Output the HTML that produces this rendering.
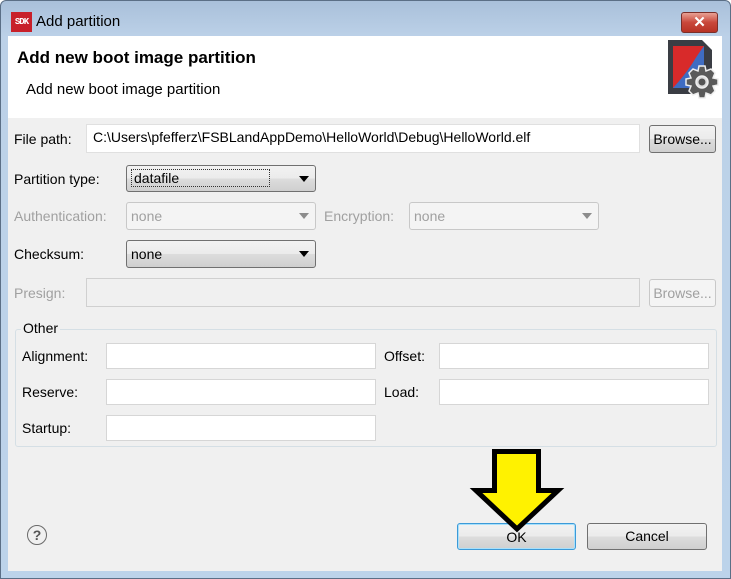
<!DOCTYPE html>
<html><head><style>
body{margin:0;width:731px;height:579px;overflow:hidden;font-family:"Liberation Sans",sans-serif;font-size:14px;color:#000;}
.win{position:absolute;left:0;top:0;width:729px;height:577px;border:1px solid #5b6f86;border-radius:6px 6px 0 0;background:linear-gradient(#a9c0da 0,#bcd1e8 36px,#bcd3ea 100%);}
.ab{position:absolute;}
.hdr{position:absolute;left:8px;top:36px;width:714px;height:82px;background:#fff;}
.body{position:absolute;left:8px;top:118px;width:714px;height:453px;background:#f0f0f0;}
.lbl{position:absolute;font-size:14px;}
.dis{color:#a0a0a0;}
.inp{position:absolute;background:#fff;border:1px solid #d6d6d6;box-sizing:border-box;}
.btn{position:absolute;box-sizing:border-box;border:1px solid #707070;border-radius:3px;background:linear-gradient(#f2f2f2 0,#ebebeb 50%,#dddddd 50%,#cfcfcf 100%);text-align:center;font-size:14px;}
.combo{position:absolute;box-sizing:border-box;border:1px solid #707070;border-radius:3px;background:linear-gradient(#f2f2f2 0,#ebebeb 50%,#dddddd 50%,#cfcfcf 100%);padding-left:4px;}
.combo.d{border-color:#c8c8c8;background:#f4f4f4;color:#a0a0a0;}
.arr{position:absolute;right:6px;top:10px;width:0;height:0;border-left:5px solid transparent;border-right:5px solid transparent;border-top:6px solid #000;}
.d .arr{border-top-color:#8c8c8c;}
</style></head><body>
<div class="win"></div>
<div class="ab" style="left:11px;top:12px;width:21px;height:20px;background:#c8202a;color:#fff;font:bold 9px 'Liberation Mono',monospace;line-height:20px;text-align:center;letter-spacing:-1px;">SDK</div>
<div class="ab" style="left:36px;top:13px;font-size:15px;">Add partition</div>
<div class="ab" style="left:681px;top:12px;width:37px;height:21px;box-sizing:border-box;border:1px solid #7a2f2a;border-radius:3px;background:linear-gradient(#e8a194,#c9473a 50%,#b73325);color:#fff;font:bold 15px 'Liberation Sans';text-align:center;line-height:19px;">✕</div>
<div class="hdr"></div>
<div class="ab" style="left:17px;top:48px;font-weight:bold;font-size:17px;">Add new boot image partition</div>
<div class="ab" style="left:26px;top:81px;font-size:15px;">Add new boot image partition</div>
<svg class="ab" style="left:664px;top:36px" width="56" height="64" viewBox="0 0 56 64">
<path d="M4 4 H38 L48 14 V58 H4 Z" fill="#3a3d44"/>
<path d="M9 10 H40 V52 H9 Z" fill="#d82a2a"/>
<path d="M40 10 V52 H9 Q20 40 28 28 Q34 18 40 10Z" fill="#3f6cc2"/>
<g transform="translate(38,46)" fill="#5a5a5a" stroke="#eee" stroke-width="1.5">
<path d="M-3 -16 H3 L4 -11 L9 -13 L13 -9 L11 -4 L16 -3 V3 L11 4 L13 9 L9 13 L4 11 L3 16 H-3 L-4 11 L-9 13 L-13 9 L-11 4 L-16 3 V-3 L-11 -4 L-13 -9 L-9 -13 L-4 -11 Z"/>
<circle r="6" fill="#ddd"/><circle r="3.5" fill="#555" stroke="none"/></g>
</svg>
<div class="body"></div>
<div class="lbl" style="left:14px;top:131px;">File path:</div>
<div class="inp" style="left:86px;top:124px;width:554px;height:29px;border-color:#e0e0e0;"></div>
<div class="lbl" style="left:93px;top:129px;">C:\Users\pfefferz\FSBLandAppDemo\HelloWorld\Debug\HelloWorld.elf</div>
<div class="btn" style="left:649px;top:125px;width:67px;height:28px;line-height:26px;">Browse...</div>
<div class="lbl" style="left:14px;top:171px;">Partition type:</div>
<div class="combo" style="left:126px;top:165px;width:190px;height:27px;line-height:25px;"><span style="border:1px dotted #333;padding:0 90px 0 2px;">datafile</span><div class="arr"></div></div>
<div class="lbl dis" style="left:14px;top:208px;">Authentication:</div>
<div class="combo d" style="left:126px;top:202px;width:190px;height:28px;line-height:26px;">none<div class="arr"></div></div>
<div class="lbl dis" style="left:324px;top:208px;">Encryption:</div>
<div class="combo d" style="left:409px;top:202px;width:190px;height:28px;line-height:26px;">none<div class="arr"></div></div>
<div class="lbl" style="left:14px;top:246px;">Checksum:</div>
<div class="combo" style="left:126px;top:240px;width:190px;height:28px;line-height:26px;">none<div class="arr"></div></div>
<div class="lbl dis" style="left:14px;top:285px;">Presign:</div>
<div class="inp" style="left:86px;top:278px;width:554px;height:29px;background:#f0f0f0;border-color:#d0d0d0;"></div>
<div class="btn" style="left:649px;top:279px;width:67px;height:28px;line-height:26px;color:#a0a0a0;border-color:#c8c8c8;background:#f4f4f4;">Browse...</div>
<div class="ab" style="left:15px;top:329px;width:702px;height:118px;box-sizing:border-box;border:1px solid #d5dfe5;border-radius:3px;"></div>
<div class="lbl" style="left:21px;top:320px;background:#f0f0f0;padding:0 2px;">Other</div>
<div class="lbl" style="left:22px;top:348px;">Alignment:</div>
<div class="inp" style="left:106px;top:343px;width:270px;height:26px;"></div>
<div class="lbl" style="left:384px;top:348px;">Offset:</div>
<div class="inp" style="left:439px;top:343px;width:270px;height:26px;"></div>
<div class="lbl" style="left:22px;top:384px;">Reserve:</div>
<div class="inp" style="left:106px;top:379px;width:270px;height:26px;"></div>
<div class="lbl" style="left:384px;top:384px;">Load:</div>
<div class="inp" style="left:439px;top:379px;width:270px;height:26px;"></div>
<div class="lbl" style="left:22px;top:420px;">Startup:</div>
<div class="inp" style="left:106px;top:415px;width:270px;height:26px;"></div>
<div class="ab" style="left:27px;top:525px;width:18px;height:18px;border:1.5px solid #6a6a6a;border-radius:50%;text-align:center;font:bold 14px/18px 'Liberation Sans';color:#555;">?</div>
<div class="btn" style="left:457px;top:523px;width:119px;height:27px;line-height:27px;border-color:#3c9ad8;box-shadow:inset 0 0 0 1px #a8e0fb;">OK</div>
<div class="btn" style="left:587px;top:523px;width:120px;height:27px;line-height:25px;">Cancel</div>
<svg class="ab" style="left:0;top:0" width="731" height="579">
<path d="M494.5 451.5 H538.5 V490.5 H558 L517 529 L476 490.5 H494.5 Z" fill="#fff200" stroke="#000" stroke-width="5" stroke-linejoin="miter"/>
</svg>
</body></html>
